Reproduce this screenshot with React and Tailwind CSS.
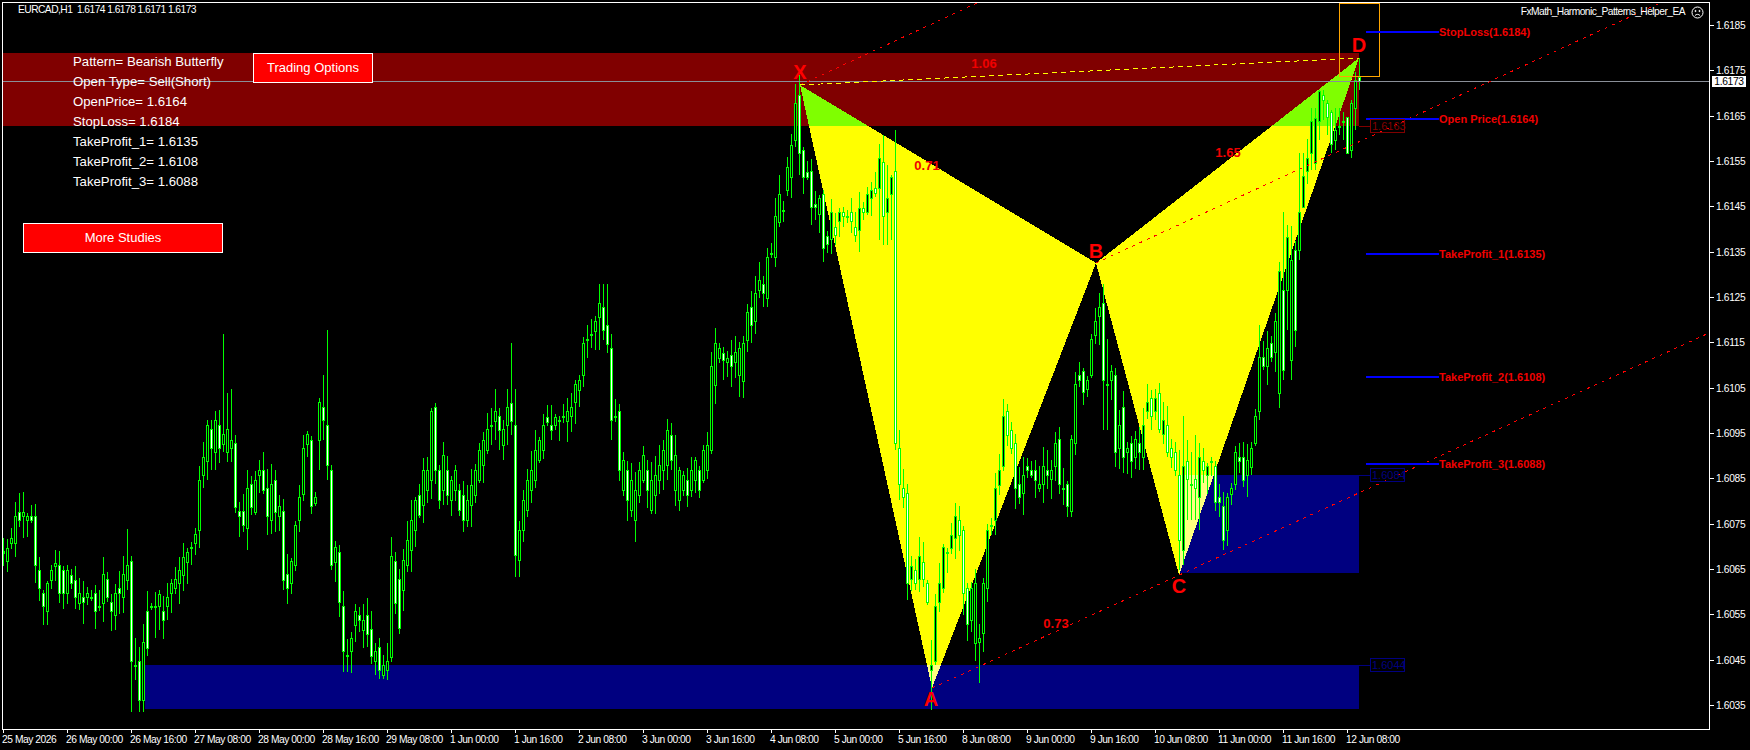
import { useId } from 'react';

// body top, body bottom, white body (one row per hourly bar, 4px apart, first bar at x=3)
const BARS = [
  [551,553],[548,561],[538,543],[516,543],[512,520,1],[512,516],[516,520],[516,520,1],[516,565,1],[570,588,1],
  [593,606,1],[583,611],[570,580],[563,566],[565,593,1],[570,593,1],[570,593],[575,583,1],[580,597,1],[593,603],
  [597,602,1],[593,597],[597,598],[593,611,1],[606,607],[574,603],[579,597,1],[602,611,1],[593,615],[588,593,1],
  [574,597],[565,580],[561,661,1],[665,666],[661,700,1],[642,700],[611,648,1],[606,607],[606,607],[594,606],
  [611,620,1],[597,606],[583,593],[579,588],[570,583],[557,575],[552,562],[547,548],[534,543],[480,530],
  [457,475],[425,461],[429,448,1],[420,452],[425,448,1],[434,444],[429,452],[440,448],[443,507,1],[511,516,1],
  [511,525,1],[488,528],[484,507,1],[480,512],[470,475],[470,490,1],[488,516,1],[484,520],[480,512,1],[506,516],
  [511,580,1],[574,588,1],[561,583],[525,565],[497,520],[448,494],[434,444],[440,506,1],[497,503],[402,440],
  [407,420,1],[425,465,1],[470,565,1],[547,562],[552,602,1],[606,651,1],[655,656],[638,651],[611,625],[615,620,1],
  [620,630],[615,634,1],[629,656,1],[651,661],[647,670,1],[665,675],[661,670],[556,657],[561,603,1],[579,628,1],
  [560,590],[540,565],[520,550],[500,530],[495,515,1],[470,505],[470,490],[411,480],[407,470,1],[470,500,1],
  [455,490],[470,495,1],[480,500],[470,490],[490,510,1],[495,520,1],[500,520],[485,505],[470,495],[450,480],
  [440,465],[429,450],[425,426],[411,421],[416,430,1],[429,445],[407,425],[403,421,1],[425,555,1],[530,560],
  [500,530],[480,510],[470,490],[450,480],[440,460],[425,450],[417,422,1],[425,430,1],[417,425],[420,421],
  [416,417],[411,421],[407,416],[384,402],[380,390],[343,375],[339,340],[334,335],[321,331],[303,317],
  [307,330,1],[325,344,1],[348,420,1],[416,417],[411,470,1],[460,490],[470,500,1],[480,510],[490,520],[470,495],
  [455,480],[470,490,1],[480,510],[475,495],[465,480],[450,470],[430,465],[435,460,1],[455,490],[470,500],
  [475,490],[480,495,1],[470,490],[460,480],[470,490,1],[450,480],[445,470],[366,450],[343,385],[348,358],
  [353,360,1],[358,362],[355,366,1],[352,362],[348,375],[343,381],[312,340],[307,325,1],[293,321],[280,290],
  [284,293,1],[257,298],[253,254],[216,257],[194,222],[210,211],[167,190],[145,177],[103,140],[95,153,1],
  [150,177,1],[172,177,1],[171,207,1],[204,207,1],[198,214],[194,248,1],[236,244,1],[212,239],[227,235,1],[212,221],
  [212,216,1],[216,217],[212,221,1],[227,235,1],[208,230],[208,212,1],[194,212],[190,198],[188,193,1],[158,188],
  [162,216,1],[198,212],[177,194],[171,443,1],[448,484,1],[488,497,1],[493,583,1],[566,579],[570,583,1],[556,579],
  [562,579,1],[583,602,1],[665,670],[606,661],[583,602],[547,588],[552,553],[535,548],[516,538],[520,535,1],
  [530,593,1],[588,624,1],[588,620],[583,643],[638,642],[583,633],[530,588],[525,526],[488,520],[470,485],
  [416,466],[411,435,1],[430,448,1],[443,488,1],[484,497,1],[475,493],[466,470,1],[470,475,1],[470,480,1],[484,488],
  [466,484],[470,475,1],[470,479],[443,466],[439,484,1],[488,489],[484,506,1],[439,511],[384,443],[375,380,1],
  [371,392,1],[380,389],[339,375],[321,335],[307,316],[303,380,1],[384,385],[371,380],[375,452,1],[425,448],
  [407,457,1],[448,452],[443,461,1],[439,457],[443,452,1],[425,457],[402,411],[398,416,1],[398,411],[393,429,1],
  [420,434],[425,452,1],[448,457,1],[452,470,1],[475,540,1],[466,550],[461,479,1],[484,485],[479,488,1],[457,497],
  [461,470,1],[466,475],[461,462],[466,502,1],[497,502,1],[506,540,1],[497,530],[488,494],[452,484],[457,461,1],
  [457,480,1],[460,475],[448,467],[416,443],[357,411],[357,366,1],[348,366],[343,357,1],[321,352],[271,393],
  [290,370,1],[237,290],[260,360],[250,330,1],[212,250],[176,207],[158,171],[121,153],[118,163],[91,121],
  [95,100,1],[103,117,1],[112,144,1],[130,140],[126,127],[121,122],[117,153,1],[103,150],[80,108],[77,81,1],
];

// wicks that stand out, by bar x; the others get a short pseudo-random length
const LONG_WICKS = {
  3: [538,566], 15: [502,557], 47: [581,625], 127: [529,590], 131: [556,712], 135: [638,680], 139: [647,712],
  143: [624,712], 155: [592,638], 159: [590,630], 163: [596,639], 167: [583,620], 211: [420,470], 215: [411,470],
  223: [334,452], 227: [393,462], 231: [389,462], 319: [398,470], 323: [375,440], 327: [330,480], 495: [389,440],
  507: [389,445], 511: [343,435], 515: [389,577], 599: [284,350], 603: [284,340], 607: [284,353], 611: [334,440],
  794: [92,160], 798: [85,175], 879: [144,240], 883: [135,245], 887: [165,245], 891: [175,240], 895: [130,450],
  931: [640,710], 979: [624,683], 1099: [293,345], 1103: [284,430], 1107: [339,430], 1179: [450,570],
  1183: [416,565], 1187: [440,520], 1191: [452,520], 1195: [435,520], 1199: [443,530], 1259: [325,420],
  1283: [212,380], 1287: [225,330], 1291: [226,380], 1299: [153,260], 1303: [153,207], 1311: [108,170],
  1315: [108,170], 1319: [90,140], 1323: [90,120], 1327: [100,135], 1331: [110,153], 1335: [108,150],
  1339: [108,135], 1343: [112,140], 1347: [117,153], 1351: [100,158], 1355: [72,130], 1359: [58,90],
};

const PRICES = ['1.6185','1.6175','1.6165','1.6155','1.6145','1.6135','1.6125','1.6115','1.6105','1.6095','1.6085','1.6075','1.6065','1.6055','1.6045','1.6035'];

const TIMES = [
  '25 May 2026','26 May 00:00','26 May 16:00','27 May 08:00','28 May 00:00','28 May 16:00','29 May 08:00','1 Jun 00:00',
  '1 Jun 16:00','2 Jun 08:00','3 Jun 00:00','3 Jun 16:00','4 Jun 08:00','5 Jun 00:00','5 Jun 16:00','8 Jun 08:00',
  '9 Jun 00:00','9 Jun 16:00','10 Jun 08:00','11 Jun 00:00','11 Jun 16:00','12 Jun 08:00',
];

const INFO = [
  'Pattern= Bearish Butterfly','Open Type= Sell(Short)','OpenPrice= 1.6164','StopLoss= 1.6184',
  'TakeProfit_1= 1.6135','TakeProfit_2= 1.6108','TakeProfit_3= 1.6088',
];

const LEVELS = [
  { y: 32, label: 'StopLoss(1.6184)' },
  { y: 119, label: 'Open Price(1.6164)' },
  { y: 254, label: 'TakeProfit_1(1.6135)' },
  { y: 377, label: 'TakeProfit_2(1.6108)' },
  { y: 464, label: 'TakeProfit_3(1.6088)' },
];

const TRI_1 = '800,85 932,688 1096,263';
const TRI_2 = '1096,263 1179,575 1359,58';

function Bar({ bar, n }) {
  const x = 3 + n * 4;
  const seed = (n * 7919 + 131) % 97;
  const wick = LONG_WICKS[x] || [bar[0] - 3 - (seed % 18), bar[1] + 3 + ((seed * 3) % 20)];
  const h = bar[1] - bar[0];
  return (
    <g>
      <rect x={x} y={wick[0]} width="1" height={wick[1] - wick[0]} fill="#00ff00" />
      <rect x={x - 1} y={bar[0]} width="3" height={h + 1} fill="#00ff00" />
      {h > 2 && <rect x={x} y={bar[0] + 1} width="1" height={h - 1} fill={bar[2] ? '#ffffff' : '#000000'} />}
    </g>
  );
}

function PriceTag({ y, text, color }) {
  return (
    <g>
      <line x1="1359" y1={y} x2="1370" y2={y} stroke={color} />
      <rect x="1370.5" y={y - 6.5} width="34" height="13" fill="none" stroke={color} />
      <text x="1372" y={y + 4} fill={color} className="text-[11px]">{text}</text>
    </g>
  );
}

function Chart() {
  const id = useId();
  return (
    <svg width="1706" height="726" viewBox="3 3 1706 726" className="block" shapeRendering="crispEdges">
      <defs>
        <clipPath id={id + 'red'}>
          <rect x="3" y="53" width="1356" height="73" />
        </clipPath>
        <clipPath id={id + 'blue'}>
          <rect x="145" y="665" width="1214" height="44" />
          <rect x="1179" y="475" width="180" height="98" />
        </clipPath>
      </defs>

      <rect x="3" y="53" width="1356" height="73" fill="#800000" />
      <rect x="145" y="665" width="1214" height="44" fill="#000080" />
      <rect x="1179" y="475" width="180" height="98" fill="#000080" />

      <polygon points={TRI_1} fill="#ffff00" />
      <polygon points={TRI_2} fill="#ffff00" />
      <g clipPath={`url(#${id}red)`}>
        <polygon points={TRI_1} fill="#7fff00" />
        <polygon points={TRI_2} fill="#7fff00" />
      </g>
      <g clipPath={`url(#${id}blue)`}>
        <polygon points={TRI_1} fill="#ffff80" />
        <polygon points={TRI_2} fill="#ffff80" />
      </g>

      {BARS.map((bar, n) => (
        <Bar key={n} bar={bar} n={n} />
      ))}

      <rect x="3" y="81" width="1706" height="1" fill="#8a8f98" />

      <g stroke="#ff0000" strokeDasharray="3 5">
        <line x1="800" y1="85" x2="977" y2="3" />
        <line x1="1096" y1="263" x2="1660" y2="3" />
        <line x1="932" y1="688" x2="1709" y2="333" />
      </g>
      <line x1="800" y1="85" x2="1359" y2="58" stroke="#ffff00" strokeDasharray="5 4" />

      <rect x="1339.5" y="3" width="40" height="73" fill="none" stroke="#ffa500" />

      {LEVELS.map((l) => (
        <g key={l.y}>
          <rect x="1366" y={l.y - 1} width="73" height="2" fill="#0000ff" />
          <text x="1439" y={l.y + 4} fill="#f00000" className="text-[11px] font-bold">{l.label}</text>
        </g>
      ))}

      <PriceTag y={126} text="1.6163" color="#800000" />
      <PriceTag y={475} text="1.6084" color="#000080" />
      <PriceTag y={665} text="1.6044" color="#000080" />

      <g fill="#ff0000" textAnchor="middle" className="text-[20px] font-bold">
        <text x="800" y="79">X</text>
        <text x="931" y="706">A</text>
        <text x="1096" y="258">B</text>
        <text x="1179" y="593">C</text>
        <text x="1359" y="52">D</text>
      </g>
      <g fill="#f00000" textAnchor="middle" className="text-[13px] font-bold">
        <text x="984" y="68">1.06</text>
        <text x="927" y="170">0.71</text>
        <text x="1228" y="157">1.65</text>
        <text x="1056" y="628">0.73</text>
      </g>
    </svg>
  );
}

function RedButton({ className, children }) {
  return (
    <button className={`absolute bg-[#ff0000] border border-white text-white text-[13px] ${className}`}>
      {children}
    </button>
  );
}

export default function App() {
  return (
    <div className="relative w-[1750px] h-[750px] bg-black text-white overflow-hidden pt-[2px] pl-[2px] font-['Liberation_Sans',Arial,sans-serif]">
      <div className="flex">
        <div className="relative w-[1708px] h-[728px] border border-white shrink-0">
          <Chart />

          <div className="absolute left-[15px] top-0 text-[10.25px] tracking-[-0.55px] leading-[14px] whitespace-pre">EURCAD,H1  1.6174 1.6178 1.6171 1.6173</div>

          <div className="absolute right-[5px] top-[2px] flex items-center gap-[6px] text-[10.25px] tracking-[-0.55px] leading-[14px]">
            <span>FxMath_Harmonic_Patterns_Helper_EA</span>
            <svg width="13" height="13" viewBox="0 0 13 13" fill="none" stroke="#ffffff" strokeWidth="1">
              <circle cx="6.5" cy="6.5" r="5.5" />
              <circle cx="4.5" cy="5" r="0.6" fill="#ffffff" />
              <circle cx="8.5" cy="5" r="0.6" fill="#ffffff" />
              <path d="M4 9.5c1.2-1.5 3.8-1.5 5 0" />
            </svg>
          </div>

          <div className="absolute left-[70px] top-[49px] flex flex-col text-[13.2px] leading-[20px]">
            {INFO.map((t) => (
              <div key={t}>{t}</div>
            ))}
          </div>

          <RedButton className="left-[250px] top-[50px] w-[120px] h-[30px]">Trading Options</RedButton>
          <RedButton className="left-[20px] top-[220px] w-[200px] h-[30px]">More Studies</RedButton>
        </div>

        <div className="flex flex-col pt-[1px] text-[10.25px] tracking-[-0.35px]">
          {PRICES.map((p) => (
            <div key={p} className="flex items-center h-[45.33px]">
              <span className="w-[4px] h-px bg-white mr-[2px]" />
              <span>{p}</span>
            </div>
          ))}
        </div>
      </div>

      <div className="flex">
        {TIMES.map((t) => (
          <div key={t} className="w-[64px] shrink-0 flex flex-col items-start">
            <span className="ml-px w-px h-[3px] bg-white" />
            <span className="text-[10.25px] tracking-[-0.45px] leading-[14px] whitespace-nowrap">{t}</span>
          </div>
        ))}
      </div>

      <div className="absolute left-[1712px] top-[76px] w-[34px] h-[11px] bg-white text-black text-[10.25px] tracking-[-0.35px] leading-[11px] text-center">1.6173</div>
    </div>
  );
}
